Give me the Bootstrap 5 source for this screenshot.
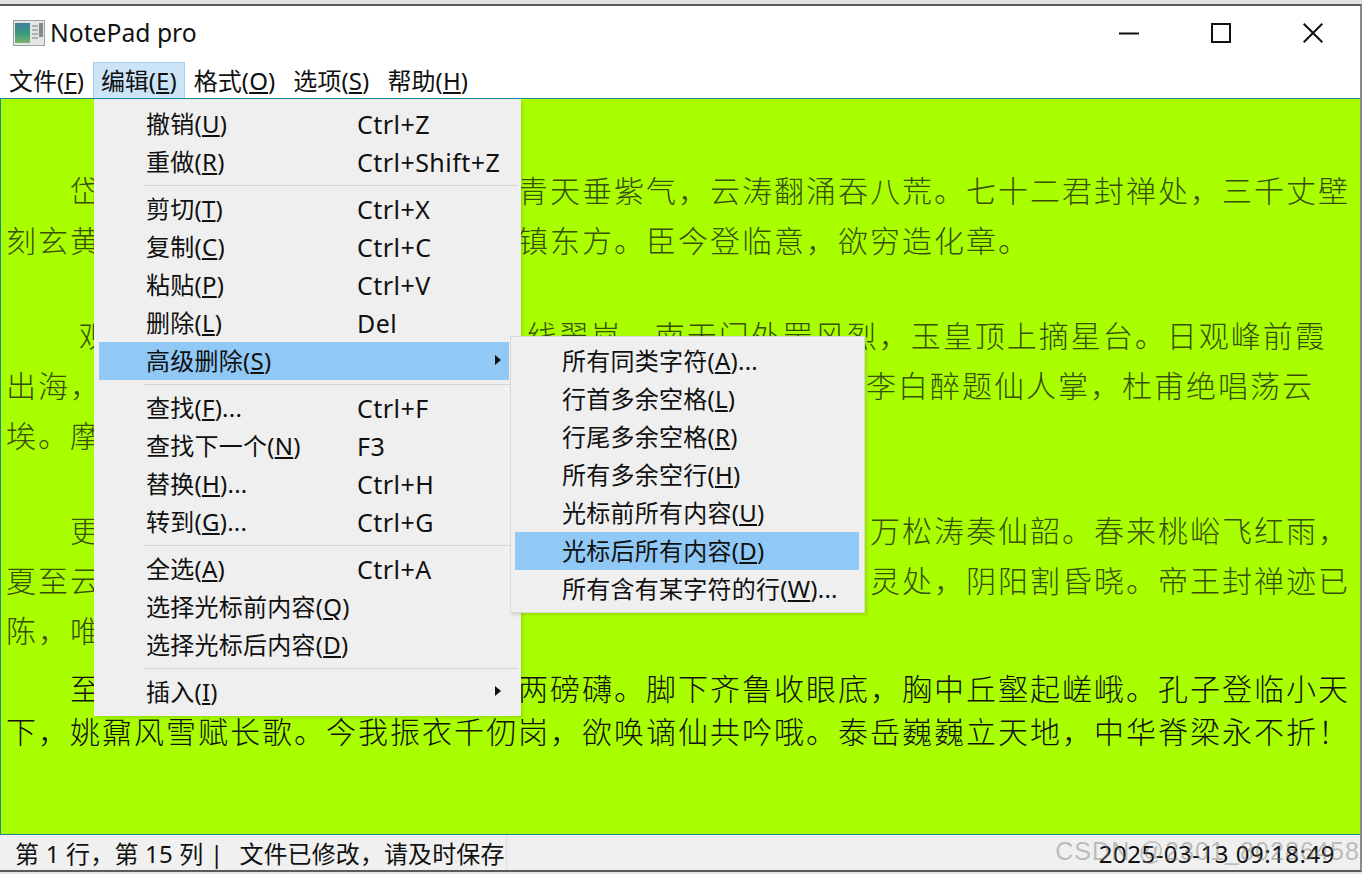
<!DOCTYPE html>
<html lang="zh-CN">
<head>
<meta charset="utf-8">
<title>NotePad pro</title>
<link href="https://cdn.jsdelivr.net/npm/bootstrap@5.3.0/dist/css/bootstrap.min.css" rel="stylesheet">
<style>
html,body{height:874px;margin:0;overflow:hidden;background:#e3e3e3}
body{padding-top:4px;font-family:"Noto Sans","Noto Sans CJK SC",sans-serif;color:#111}
.appwin{height:868px;background:#fff;border-top:2px solid #5a5a5a;border-bottom:2px solid #5a5a5a;border-right:2px solid #8a8a8a;position:relative;overflow:hidden}
.titlerow{height:56px;padding:0 0 2px 13px}
.apptitle{font-size:24.7px;margin-left:5px;line-height:1;color:#111}
.winbtns{width:204px;margin-right:37px}
.winbtn{width:20px;height:20px;display:block}
.menurow{height:36px;padding:0 0 0 .5px;flex-wrap:nowrap;justify-content:flex-start}
.topitem{font-size:24px;line-height:36px;padding:0 7.5px;height:36px;color:#111;border:1px solid transparent;border-bottom:0}
.topitem.opened{background:#cce4f7;border-color:#a6d0f0;padding-left:6.5px;margin-left:1px}
.topitem.opened ~ .topitem{padding-right:8.5px;letter-spacing:.1px}
.editarea{height:738px;background:#a9ff00;border:1px solid #1a8a96;overflow:hidden;padding:65px 0 0 5px;margin-right:-1px}
.ltext{font-family:"Noto Sans CJK SC",sans-serif;font-size:30px;letter-spacing:2px;white-space:pre;color:#38500a;font-weight:300}
.ltext .linex{display:block;height:50px;line-height:50px}
.ltext.para{margin-bottom:45px}
.ltext.lastp{color:#111;margin-top:-33px}
.ltext.lastp .linex{height:43px;line-height:43px}
.shiftgap{display:inline-block;width:11px}
.statusrow{height:35px;background:#f0f0f0;font-size:24px;line-height:38px;padding-left:15px;color:#111;letter-spacing:.2px}
.statusmsg{padding-left:16px;padding-right:1px;border-right:1px solid #dedede;letter-spacing:.1px}
.statustime{margin-left:auto;padding-right:25px;letter-spacing:.5px}
.menubox.dropdown-menu{display:block;position:absolute;border-radius:0;background:#efefef;border:1px solid #d8d8d8;margin:0;padding:5px 0 3px 4px;min-width:0;font-size:24px;box-shadow:2px 2px 3px rgba(0,0,0,.12)}
.menumain{left:94px;top:93px;width:427px;height:617px;border-color:#efefef!important}
.menusub{left:510px;top:330px;width:355px;height:277px}
.menubox .dropdown-item{display:flex;align-items:center;height:38px;line-height:38px;padding:0 0 0 47px;color:#111;position:relative;letter-spacing:.25px}
.menumain .dropdown-item{width:410px}
.menusub .dropdown-item{width:344px}
.menubox .dropdown-item.hot{background:#90c8f6}
.menubox .dropdown-divider{margin:4px 0 4px 44px;border-top:1px solid #d5d5d5;width:375px;opacity:1}
.itemlabel{width:211px;flex:none}
.itemkey{font-size:25px;letter-spacing:.45px}
.subcaret{position:absolute;right:8px;top:13px;width:0;height:0;border-left:6px solid #111;border-top:5.5px solid transparent;border-bottom:5.5px solid transparent}
.wmark{position:absolute;right:0;bottom:1px;font-size:25px;line-height:36px;letter-spacing:1.1px;color:rgba(120,120,120,.45);font-family:"Liberation Sans",sans-serif;white-space:nowrap}
u{text-underline-offset:2px}
</style>
</head>
<body>
<div class="appwin d-flex flex-column">
  <div class="titlerow d-flex align-items-center">
    <svg width="32" height="26" viewBox="0 0 32 26" aria-hidden="true">
      <defs><linearGradient id="pane" x1="0" y1="0" x2="0" y2="1"><stop offset="0" stop-color="#3f7f9a"/><stop offset=".55" stop-color="#3c9a7a"/><stop offset="1" stop-color="#7db56a"/></linearGradient></defs>
      <rect x=".5" y=".5" width="31" height="25" fill="#e4e6e4" stroke="#9aa3a3"/>
      <rect x="2" y="3" width="15" height="20" fill="url(#pane)"/>
      <path d="M19 6h6M19 10h6M19 14h6M19 18h6" stroke="#9aa3a3" stroke-width="1.5"/>
      <rect x="26" y="3" width="4" height="14" fill="#7f8c8c"/>
    </svg>
    <span class="apptitle">NotePad pro</span>
    <div class="winbtns ms-auto d-flex justify-content-between align-items-center">
      <svg class="winbtn" viewBox="0 0 20 20" aria-hidden="true"><path d="M0 10.5h20" stroke="#111" stroke-width="2"/></svg>
      <svg class="winbtn" viewBox="0 0 20 20" aria-hidden="true"><rect x="1" y="1" width="18" height="18" fill="none" stroke="#111" stroke-width="2"/></svg>
      <svg class="winbtn" viewBox="0 0 20 20" aria-hidden="true"><path d="M.7.7l18.6 18.6M19.3.7L.7 19.3" stroke="#111" stroke-width="2" fill="none"/></svg>
    </div>
  </div>
  <nav class="navbar menurow bg-white d-flex">
    <span class="topitem">文件(<u>F</u>)</span>
    <span class="topitem opened">编辑(<u>E</u>)</span>
    <span class="topitem">格式(<u>O</u>)</span>
    <span class="topitem">选项(<u>S</u>)</span>
    <span class="topitem">帮助(<u>H</u>)</span>
  </nav>
  <main class="editarea">
    <div class="ltext para"><span class="linex">　　岱　　　　　　　　　　　　　青天垂紫气，云涛翻涌吞八荒。七十二君封禅处，三千丈壁</span><span class="linex">刻玄黄　　　　　　　　　　　　　镇东方。臣今登临意，欲穷造化章。</span></div>
    <div class="ltext para"><span class="linex"> 　　观　　　　　　　　　　　　　线翠岚，南天门外罡风烈，玉皇顶上摘星台。日观峰前霞</span><span class="linex">出海，　　　　　　　　　　　　　　　　　　　　　　　　<span class="shiftgap"></span>李白醉题仙人掌，杜甫绝唱荡云</span><span class="linex">埃。摩</span></div>
    <div class="ltext para"><span class="linex">　　更　　　　　　　　　　　　　　　　　　　　　　　　万松涛奏仙韶。春来桃峪飞红雨，</span><span class="linex">夏至云　　　　　　　　　　　　　　　　　　　　　　　　灵处，阴阳割昏晓。帝王封禅迹已</span><span class="linex">陈，唯</span></div>
    <div class="ltext lastp"><span class="linex">　　至　　　　　　　　　　　　　两磅礴。脚下齐鲁收眼底，胸中丘壑起嵯峨。孔子登临小天</span><span class="linex">下，姚鼐风雪赋长歌。今我振衣千仞岗，欲唤谪仙共吟哦。泰岳巍巍立天地，中华脊梁永不折！</span></div>
  </main>
  <footer class="statusrow d-flex">
    <span>第 1 行，第 15 列 |</span>
    <span class="statusmsg">文件已修改，请及时保存</span>
    <span class="statustime">2025-03-13 09:18:49</span>
  </footer>
  <div class="wmark">CSDN @2301_80286458</div>

  <div class="dropdown-menu menubox menumain">
    <a class="dropdown-item"><span class="itemlabel">撤销(<u>U</u>)</span><span class="itemkey">Ctrl+Z</span></a>
    <a class="dropdown-item"><span class="itemlabel">重做(<u>R</u>)</span><span class="itemkey">Ctrl+Shift+Z</span></a>
    <hr class="dropdown-divider">
    <a class="dropdown-item"><span class="itemlabel">剪切(<u>T</u>)</span><span class="itemkey">Ctrl+X</span></a>
    <a class="dropdown-item"><span class="itemlabel">复制(<u>C</u>)</span><span class="itemkey">Ctrl+C</span></a>
    <a class="dropdown-item"><span class="itemlabel">粘贴(<u>P</u>)</span><span class="itemkey">Ctrl+V</span></a>
    <a class="dropdown-item"><span class="itemlabel">删除(<u>L</u>)</span><span class="itemkey">Del</span></a>
    <a class="dropdown-item hot"><span class="itemlabel">高级删除(<u>S</u>)</span><i class="subcaret"></i></a>
    <hr class="dropdown-divider">
    <a class="dropdown-item"><span class="itemlabel">查找(<u>F</u>)...</span><span class="itemkey">Ctrl+F</span></a>
    <a class="dropdown-item"><span class="itemlabel">查找下一个(<u>N</u>)</span><span class="itemkey">F3</span></a>
    <a class="dropdown-item"><span class="itemlabel">替换(<u>H</u>)...</span><span class="itemkey">Ctrl+H</span></a>
    <a class="dropdown-item"><span class="itemlabel">转到(<u>G</u>)...</span><span class="itemkey">Ctrl+G</span></a>
    <hr class="dropdown-divider">
    <a class="dropdown-item"><span class="itemlabel">全选(<u>A</u>)</span><span class="itemkey">Ctrl+A</span></a>
    <a class="dropdown-item"><span class="itemlabel">选择光标前内容(<u>Q</u>)</span></a>
    <a class="dropdown-item"><span class="itemlabel">选择光标后内容(<u>D</u>)</span></a>
    <hr class="dropdown-divider">
    <a class="dropdown-item"><span class="itemlabel">插入(<u>I</u>)</span><i class="subcaret"></i></a>
  </div>

  <div class="dropdown-menu menubox menusub">
    <a class="dropdown-item">所有同类字符(<u>A</u>)...</a>
    <a class="dropdown-item">行首多余空格(<u>L</u>)</a>
    <a class="dropdown-item">行尾多余空格(<u>R</u>)</a>
    <a class="dropdown-item">所有多余空行(<u>H</u>)</a>
    <a class="dropdown-item">光标前所有内容(<u>U</u>)</a>
    <a class="dropdown-item hot">光标后所有内容(<u>D</u>)</a>
    <a class="dropdown-item">所有含有某字符的行(<u>W</u>)...</a>
  </div>
</div>
<script src="https://cdn.jsdelivr.net/npm/bootstrap@5.3.0/dist/js/bootstrap.bundle.min.js"></script>
</body>
</html>
